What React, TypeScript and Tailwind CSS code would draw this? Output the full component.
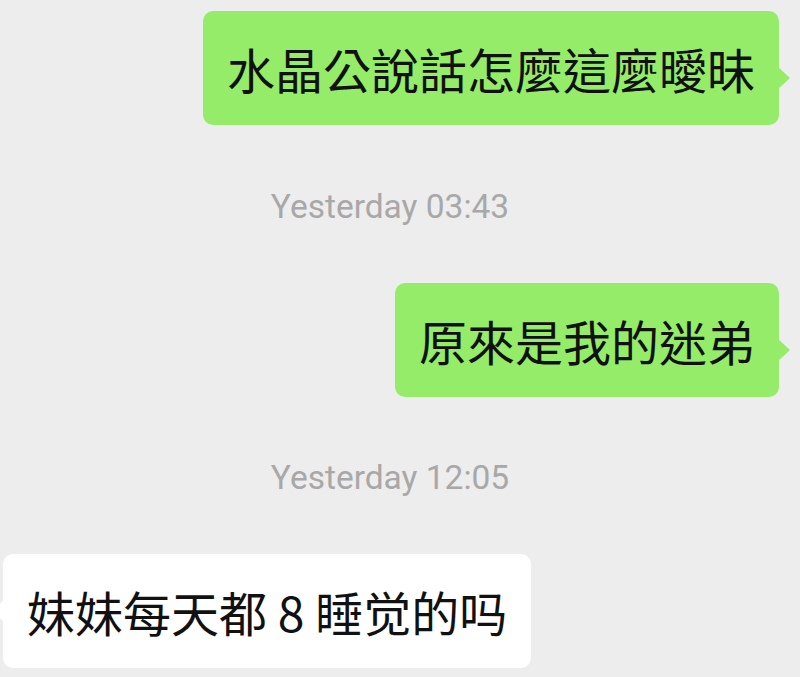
import React from "react";

const font = { fontFamily: '"Noto Sans CJK TC", "Noto Sans CJK SC", sans-serif' };

interface BubbleProps {
  text: string;
  mine?: boolean;
}

const Bubble: React.FC<BubbleProps> = ({ text, mine }) => {
  return (
    <div className={mine ? "flex justify-end pr-[21px]" : "flex justify-start pl-[3px]"}>
      <div
        className={
          "relative rounded-[10px] px-6 py-[24px] text-[48px] leading-[66px] text-[#111] " +
          (mine ? "bg-[#95ec69]" : "bg-white")
        }
      >
        {text}
        {mine ? (
          <span className="absolute right-[-11px] top-[56px] h-0 w-0 border-y-[11px] border-l-[12px] border-y-transparent border-l-[#95ec69]" />
        ) : (
          <span className="absolute left-[-11px] top-[46px] h-0 w-0 border-y-[11px] border-r-[12px] border-y-transparent border-r-white" />
        )}
      </div>
    </div>
  );
};

const Time: React.FC<{ text: string }> = ({ text }) => (
  <div className="flex justify-center pr-5">
    <span className="text-[33.5px] leading-[40px] text-[#a8a8a8]" style={{ fontFamily: "Roboto, sans-serif" }}>
      {text}
    </span>
  </div>
);

export default function App() {
  return (
    <div className="h-[677px] w-[800px] overflow-hidden bg-[#ededed] pt-[11px]" style={font}>
      <Bubble mine text="水晶公說話怎麼這麼曖昧" />
      <div className="mt-[62px]">
        <Time text="Yesterday 03:43" />
      </div>
      <div className="mt-[56px]">
        <Bubble mine text="原來是我的迷弟" />
      </div>
      <div className="mt-[61px]">
        <Time text="Yesterday 12:05" />
      </div>
      <div className="mt-[56px]">
        <Bubble text="妹妹每天都 8 睡觉的吗" />
      </div>
    </div>
  );
}
